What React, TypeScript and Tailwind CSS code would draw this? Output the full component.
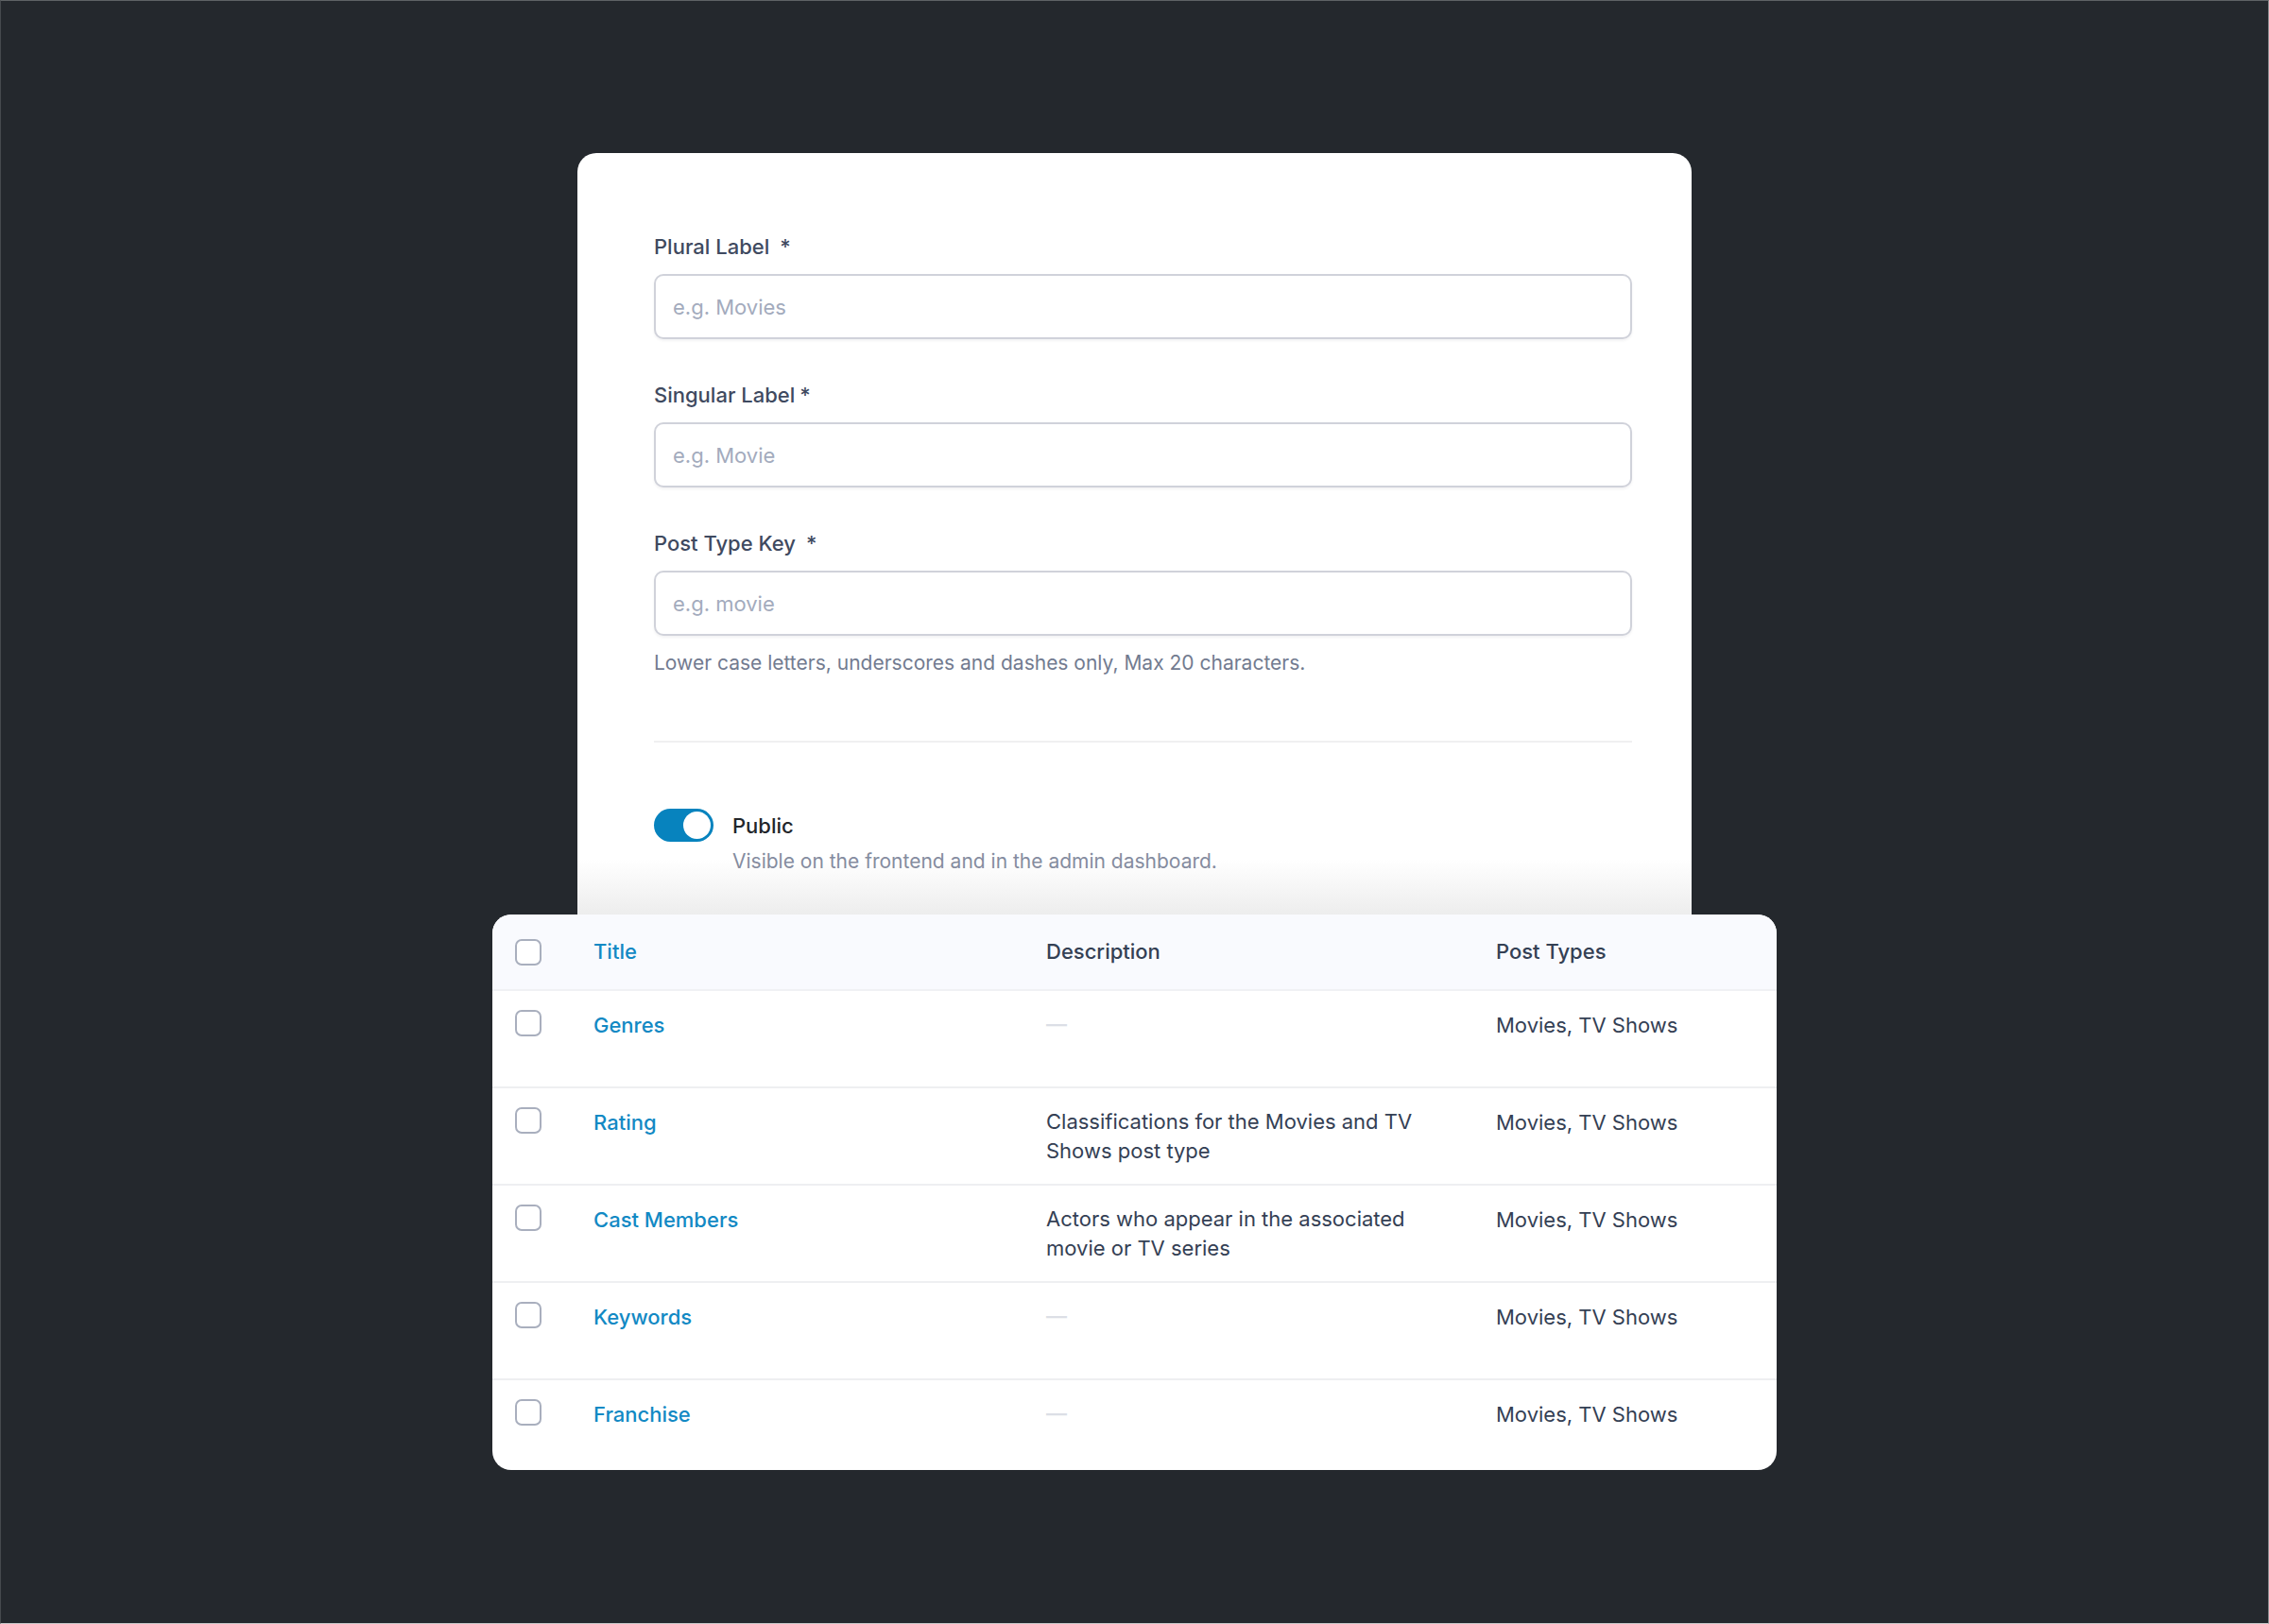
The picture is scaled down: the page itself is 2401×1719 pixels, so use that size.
import { useState } from "react";

type Field = { id: string; label: string; gap: string; placeholder: string; help?: string };

const fields: Field[] = [
  { id: "plural", label: "Plural Label", gap: "gap-[11px]", placeholder: "e.g. Movies" },
  { id: "singular", label: "Singular Label", gap: "gap-[5px]", placeholder: "e.g. Movie" },
  {
    id: "key",
    label: "Post Type Key",
    gap: "gap-[11px]",
    placeholder: "e.g. movie",
    help: "Lower case letters, underscores and dashes only, Max 20 characters.",
  },
];

const rows = [
  { title: "Genres", description: "" },
  { title: "Rating", description: "Classifications for the Movies and TV Shows post type" },
  { title: "Cast Members", description: "Actors who appear in the associated movie or TV series" },
  { title: "Keywords", description: "" },
  { title: "Franchise", description: "" },
];

function TextField({ id, label, gap, placeholder, help }: Field) {
  return (
    <div>
      <label htmlFor={id} className={`flex font-medium text-[#3f4a60] ${gap}`}>
        <span>{label}</span>
        <span>*</span>
      </label>
      <input
        id={id}
        type="text"
        placeholder={placeholder}
        className="mt-[13px] block h-[69px] w-full rounded-[10px] border-2 border-[#d0d2da] bg-white px-[18px] shadow-[0_2px_3px_rgba(16,24,40,0.05)] outline-none placeholder:text-[#a3abbd]"
      />
      {help && <p className="mt-[13px] text-[21px] text-[#727b90]">{help}</p>}
    </div>
  );
}

function Toggle() {
  const [on, setOn] = useState(true);
  return (
    <div className="flex gap-5">
      <button
        type="button"
        role="switch"
        aria-checked={on}
        aria-labelledby="public-label"
        aria-describedby="public-help"
        onClick={() => setOn(!on)}
        className={`flex h-[35px] w-[63px] shrink-0 items-center rounded-full px-[3px] ${
          on ? "justify-end bg-[#0783be]" : "justify-start bg-gray-300"
        }`}
      >
        <span className="size-[29px] rounded-full bg-white" />
      </button>
      <div>
        <p id="public-label" className="leading-9 font-medium text-[#22262b]">
          Public
        </p>
        <p id="public-help" className="mt-1 text-[21px] text-[#858c9f]">
          Visible on the frontend and in the admin dashboard.
        </p>
      </div>
    </div>
  );
}

function Checkbox({ label }: { label: string }) {
  return (
    <input
      type="checkbox"
      aria-label={label}
      className="block size-7 appearance-none rounded-[7px] border-2 border-[#a9afbe] bg-white checked:bg-[#0783be]"
    />
  );
}

export default function App() {
  return (
    <main className="flex min-h-screen flex-col items-center border border-t-[#5f6366] border-r-[#8b8d90] border-b-[#c8c9ca] border-l-[#45494d] bg-[#24282d] pt-[161px] pb-40 font-['Inter',sans-serif] text-[22px] leading-[31px]">
      <form className="w-full max-w-[1179px] rounded-t-[20px] bg-white">
        <div className="flex flex-col gap-11 pt-[84px] pr-[63px] pl-[81px]">
          {fields.map((f) => (
            <TextField key={f.id} {...f} />
          ))}
        </div>
        <hr className="mt-[67px] mr-[63px] ml-[81px] border-t-2 border-[#f0f0f1]" />
        <div className="bg-linear-to-b from-white from-68% to-[#ededed] pt-[70px] pr-[63px] pb-[41px] pl-[81px]">
          <Toggle />
        </div>
      </form>

      <section className="w-full max-w-[1359px] overflow-hidden rounded-[20px] bg-white">
        <table className="w-full table-fixed text-left text-[#344054]">
          <colgroup>
            <col className="w-[107px]" />
            <col className="w-[479px]" />
            <col className="w-[476px]" />
            <col />
          </colgroup>
          <thead>
            <tr className="h-[80px] border-b-2 border-[#f0f1f4] bg-[#f9fafe]">
              <th className="pl-6">
                <Checkbox label="Select all" />
              </th>
              <th className="font-medium">
                <a href="#title" className="text-[#1289c4]">
                  Title
                </a>
              </th>
              <th className="font-medium">Description</th>
              <th className="font-medium">Post Types</th>
            </tr>
          </thead>
          <tbody>
            {rows.map((r) => (
              <tr key={r.title} className="h-[103px] border-b-2 border-[#eeeff1] align-top last:h-[96px] last:border-b-0">
                <td className="pt-5 pl-6">
                  <Checkbox label={`Select ${r.title}`} />
                </td>
                <td className="pt-[21px] font-medium">
                  <a href={`#${r.title}`} className="text-[#1289c4]">
                    {r.title}
                  </a>
                </td>
                <td className="pt-5 pr-16">
                  {r.description || <span className="font-semibold text-[#dcdfe6]">—</span>}
                </td>
                <td className="pt-[21px]">Movies, TV Shows</td>
              </tr>
            ))}
          </tbody>
        </table>
      </section>
    </main>
  );
}
